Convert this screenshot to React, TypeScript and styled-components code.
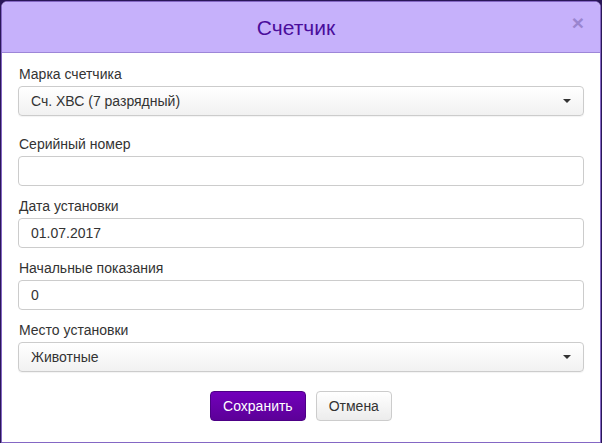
import React from "react";
import styled, { createGlobalStyle } from "styled-components";

const GlobalStyle = createGlobalStyle`
  html, body {
    margin: 0;
    padding: 0;
    background: #2a1758;
    font-family: "Liberation Sans", Arial, sans-serif;
  }
  * { box-sizing: border-box; }
`;

const Modal = styled.div`
  width: 600px;
  height: 442px;
  margin: 1px 1px 0;
  background: #fff;
  border: 1px solid #8467c4;
  border-radius: 6px 6px 0 0;
  overflow: hidden;
  display: flex;
  flex-direction: column;
`;

const Header = styled.div`
  position: relative;
  height: 51px;
  background: #c6b1fb;
  border-bottom: 1px solid #9d86d8;
  display: flex;
  align-items: center;
  justify-content: center;
`;

const Title = styled.h4`
  margin: 0;
  font-size: 21px;
  font-weight: normal;
  color: #4a0d9c;
  padding-top: 2px;
  padding-right: 10px;
`;

const Close = styled.button`
  position: absolute;
  right: 16px;
  top: 10px;
  border: 0;
  background: none;
  padding: 0;
  font-size: 21px;
  font-weight: bold;
  line-height: 1;
  color: #9a85cf;
  cursor: pointer;
  font-family: "Liberation Sans", Arial, sans-serif;
`;

const Body = styled.form`
  padding: 11px 16px 0 16px;
  display: flex;
  flex-direction: column;
`;

const Group = styled.div<{ $gap: number }>`
  display: flex;
  flex-direction: column;
  margin-bottom: ${({ $gap }) => $gap}px;
`;

const Label = styled.label`
  font-size: 14px;
  line-height: 20px;
  color: #333;
  margin-bottom: 2px;
  padding-left: 1px;
`;

const Field = styled.div`
  height: 30px;
  border: 1px solid #cccccc;
  border-radius: 4px;
  background: #fff;
  display: flex;
  align-items: center;
  padding: 0 12px;
  font-size: 14px;
  color: #333;
`;

const SelectField = styled(Field)`
  background: linear-gradient(#ffffff, #f1f1f1);
  justify-content: space-between;
  box-shadow: 0 1px 1px rgba(0, 0, 0, 0.05);
`;

const Caret = styled.span`
  width: 0;
  height: 0;
  border-left: 4px solid transparent;
  border-right: 4px solid transparent;
  border-top: 4px solid #333;
`;

const Footer = styled.div`
  display: flex;
  justify-content: center;
  gap: 10px;
  padding-top: 9px;
`;

const Button = styled.button<{ $primary?: boolean }>`
  height: 30px;
  padding: 0 12px;
  font-size: 14px;
  font-family: "Liberation Sans", Arial, sans-serif;
  border-radius: 4px;
  cursor: pointer;
  color: ${({ $primary }) => ($primary ? "#fff" : "#333")};
  border: 1px solid ${({ $primary }) => ($primary ? "#4d0086" : "#cccccc")};
  background: ${({ $primary }) =>
    $primary
      ? "linear-gradient(#7200bb, #5c0098)"
      : "linear-gradient(#ffffff, #ececec)"};
`;

const fields = [
  { label: "Марка счетчика", value: "Сч. ХВС (7 разрядный)", select: true, gap: 18 },
  { label: "Серийный номер", value: "", gap: 10 },
  { label: "Дата установки", value: "01.07.2017", gap: 10 },
  { label: "Начальные показания", value: "0", gap: 10 },
  { label: "Место установки", value: "Животные", select: true, gap: 10 },
];

export default function App() {
  return (
    <>
      <GlobalStyle />
      <Modal>
        <Header>
          <Title>Счетчик</Title>
          <Close type="button">×</Close>
        </Header>
        <Body>
          {fields.map((f) => (
            <Group key={f.label} $gap={f.gap}>
              <Label>{f.label}</Label>
              {f.select ? (
                <SelectField>
                  <span>{f.value}</span>
                  <Caret />
                </SelectField>
              ) : (
                <Field>{f.value}</Field>
              )}
            </Group>
          ))}
          <Footer>
            <Button type="button" $primary>
              Сохранить
            </Button>
            <Button type="button">Отмена</Button>
          </Footer>
        </Body>
      </Modal>
    </>
  );
}
